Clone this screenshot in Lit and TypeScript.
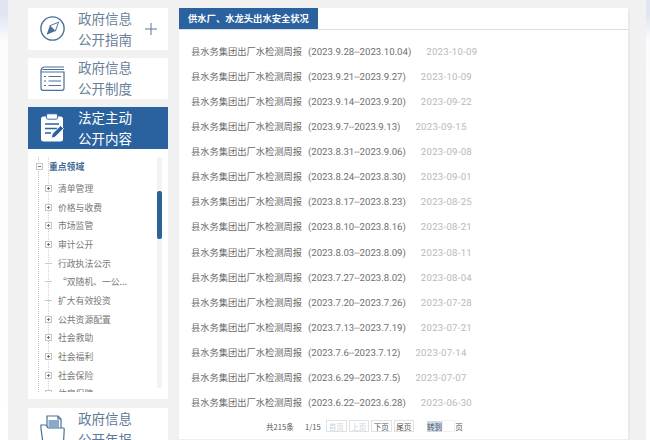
import { LitElement, html, css, svg } from "lit";
import { customElement } from "lit/decorators.js";

const rows: [string, string][] = [
  ["2023.9.28--2023.10.04", "2023-10-09"],
  ["2023.9.21--2023.9.27", "2023-10-09"],
  ["2023.9.14--2023.9.20", "2023-09-22"],
  ["2023.9.7--2023.9.13", "2023-09-15"],
  ["2023.8.31--2023.9.06", "2023-09-08"],
  ["2023.8.24--2023.8.30", "2023-09-01"],
  ["2023.8.17--2023.8.23", "2023-08-25"],
  ["2023.8.10--2023.8.16", "2023-08-21"],
  ["2023.8.03--2023.8.09", "2023-08-11"],
  ["2023.7.27--2023.8.02", "2023-08-04"],
  ["2023.7.20--2023.7.26", "2023-07-28"],
  ["2023.7.13--2023.7.19", "2023-07-21"],
  ["2023.7.6--2023.7.12", "2023-07-14"],
  ["2023.6.29--2023.7.5", "2023-07-07"],
  ["2023.6.22--2023.6.28", "2023-06-30"],
];

const tree: [string, boolean][] = [
  ["清单管理", true],
  ["价格与收费", true],
  ["市场监管", true],
  ["审计公开", true],
  ["行政执法公示", false],
  ["“双随机、一公...", false],
  ["扩大有效投资", false],
  ["公共资源配置", true],
  ["社会救助", true],
  ["社会福利", true],
  ["社会保险", true],
  ["住房保障", true],
];

const compass = svg`<svg class="ico" viewBox="0 0 25 25" width="25" height="25" fill="none">
  <circle cx="12.5" cy="12.5" r="11.6" stroke="#4a7097" stroke-width="1.4"/>
  <path d="M18.6 6.2 L15.4 15 L6.6 18.8 L9.8 9.8 Z" fill="#4a7097"/>
  <path d="M18.6 6.2 L9.8 9.8 L15.4 15 Z" fill="#fff" stroke="#4a7097" stroke-width=".9"/>
</svg>`;

const listDoc = svg`<svg class="ico" viewBox="0 0 25 25" width="25" height="25" fill="none" stroke="#4a7097" stroke-width="1.2">
  <path d="M1 5 V22 Q1 24.3 3 24.3 H22 Q24 24.3 24 22 V5.5"/>
  <path d="M1 5 Q1 1 5 1 H24"/>
  <path d="M2.5 3.5 H24 M1 6 H24"/>
  <path d="M4 10.5 H6 M8.5 10.5 H21 M4 15 H6 M8.5 15 H21 M4 19.5 H6 M8.5 19.5 H21"/>
</svg>`;

const clip = svg`<svg class="ico" viewBox="0 0 24 29" width="24" height="29" fill="none">
  <rect x="1" y="3.5" width="22" height="25" rx="2.5" fill="#fff"/>
  <rect x="6.5" y="0.8" width="11" height="5.4" rx="1.4" fill="#fff" stroke="#2a62a0" stroke-width=".9"/>
  <path d="M5 11 H19 M5 15.5 H17 M5 20 H11" stroke="#2a62a0" stroke-width="1.5"/>
  <path d="M20.5 12.6 L23.6 15.6 L15 24.2 L11.2 25.2 L12.2 21 Z" fill="#2a62a0" stroke="#fff" stroke-width=".9"/>
</svg>`;

const folder = svg`<svg class="ico" viewBox="0 0 25 28" width="25" height="28" fill="none" stroke="#4a7097" stroke-width="1.2">
  <path d="M7 12 V1 H18 L21 4 V13" />
  <path d="M18 1 V4 H21" />
  <rect x="8.5" y="5" width="10.5" height="7.5" fill="#8aa9c8" stroke="none"/>
  <path d="M1 10 H6 L8 13 H23 Q24.4 13 24.2 15 L23.5 28 H3 L1 14 Z" fill="#fff"/>
</svg>`;

@customElement("app-root")
export class AppRoot extends LitElement {
  static styles = css`
    :host {
      display: block;
      width: 650px;
      height: 440px;
      overflow: hidden;
      background: linear-gradient(180deg, #dfe6f2 0, #dfe6f2 14px, #fcfcfd 42px, #fff 100%);
      font-family: "Noto Sans CJK SC", "Liberation Sans", sans-serif;
    }
    .page {
      margin-left: 8px;
      width: 638px;
      height: 440px;
      background: #f1f1f1;
      box-sizing: border-box;
      padding: 8px 0 0 20px;
      display: flex;
      gap: 11px;
    }
    .side {
      width: 140px;
      flex: none;
      display: flex;
      flex-direction: column;
    }
    .card {
      height: 41.5px;
      background: #fff;
      display: flex;
      align-items: center;
      flex: none;
      margin-bottom: 8px;
      color: #6a7f99;
      font-size: 13.5px;
      line-height: 21px;
    }
    .card .iw {
      width: 50px;
      display: flex;
      padding-left: 12px;
      box-sizing: border-box;
      flex: none;
    }
    .card .t { white-space: nowrap; }
    .plus {
      margin-left: auto;
      width: 12px;
      height: 12px;
      margin-right: 11px;
      flex: none;
    }
    .card.on {
      background: #2a62a0;
      color: #fff;
      margin-bottom: 0;
    }
    .card.last {
      height: 60px;
      align-items: flex-start;
      margin: 9px 0 0;
      color: #5f7a99;
    }
    .card.last .iw { padding-top: 7px; }
    .treecard {
      height: 250px;
      background: #fff;
      flex: none;
      display: flex;
      box-sizing: border-box;
      padding: 8.5px 6px 7px 0;
    }
    .tree {
      flex: 1;
      overflow: hidden;
      font-size: 8.8px;
      color: #777;
      background-image:
        repeating-linear-gradient(#c4c4c4 0 1px, transparent 1px 2px),
        repeating-linear-gradient(#d4d4d4 0 1px, transparent 1px 2px);
      background-size: 1px 100%, 1px 100%;
      background-position: 10px 0, 20px 0;
      background-repeat: no-repeat;
    }
    .root {
      display: flex;
      align-items: center;
      height: 18px;
      margin: 0.5px 0 3.5px;
      padding-left: 8px;
      gap: 6px;
      color: #3f6a94;
      font-weight: 700;
    }
    .item {
      height: 18.7px;
      display: flex;
      align-items: center;
      padding-left: 17px;
      gap: 6px;
      white-space: nowrap;
    }
    .box {
      width: 7px;
      height: 7px;
      flex: none;
      display: block;
    }
    .dash {
      width: 7px;
      height: 1px;
      background: #c9c9c9;
      flex: none;
    }
    .track {
      width: 5px;
      height: 231px;
      background: #f3f3f3;
      flex: none;
      border-radius: 2px;
      position: relative;
    }
    .thumb {
      position: absolute;
      left: 0;
      top: 34px;
      width: 5px;
      height: 48px;
      background: #2a6496;
      border-radius: 2px;
    }
    .main {
      width: 449px;
      flex: none;
      background: #fff;
      height: 432px;
      display: flex;
      flex-direction: column;
      box-shadow: 2px 0 1px -0.5px #e9e9e9;
    }
    .head {
      height: 20.5px;
      border-bottom: 1px solid #ddd;
      flex: none;
    }
    .tab {
      width: 139px;
      height: 20.5px;
      background: #2a62a0;
      color: #fff;
      font-size: 9.3px;
      font-weight: 700;
      display: flex;
      align-items: center;
      padding-left: 9px;
      box-sizing: border-box;
      white-space: nowrap;
    }
    .rows {
      display: flex;
      flex-direction: column;
      padding: 9.5px 0 0 12px;
    }
    .row {
      height: 25.07px;
      line-height: 25.07px;
      display: flex;
      align-items: baseline;
      font-size: 9.25px;
      color: #6a6a6a;
      white-space: nowrap;
    }
    .row .r {
      margin-left: 6px;
      font-family: Roboto, "Liberation Sans", sans-serif;
      font-size: 9.65px;
      color: #707070;
      text-rendering: geometricPrecision;
    }
    .row .d {
      margin-left: 15px;
      font-family: Roboto, "Liberation Sans", sans-serif;
      font-size: 9.65px;
      color: #b9b9b9;
      letter-spacing: .25px;
      text-rendering: geometricPrecision;
    }
    .pager {
      display: flex;
      align-items: center;
      box-sizing: border-box;
      padding: 1px 0 2px 87px;
      height: 25px;
      font-size: 7.6px;
      color: #555;
      white-space: nowrap;
      border-bottom: 1px solid #eee;
    }
    .pager .btn {
      border: 1px solid #e2e2e2;
      height: 10px;
      width: 18.5px;
      display: flex;
      align-items: center;
      justify-content: center;
      margin-right: 2px;
    }
    .pager .off { color: #c8d4e0; }
    .pager .count { width: 39px; }
    .pager .pos { width: 21px; }
    .pager .sel { background: #c9d9ea; margin-left: 11px; }
    .pager .inp { width: 11px; height: 10px; border: 1px solid #f0f0f0; }
  `;

  private box() {
    return html`<svg class="box" viewBox="0 0 7 7"><rect x=".5" y=".5" width="6" height="6" fill="#fff" stroke="#c4c4c4"/><path d="M2 3.5H5M3.5 2V5" stroke="#777"/></svg>`;
  }

  render() {
    return html`
      <div class="page">
        <div class="side">
          <div class="card"><div class="iw">${compass}</div><div class="t">政府信息<br />公开指南</div>
            <svg class="plus" viewBox="0 0 12 12"><path d="M6 0V12M0 6H12" stroke="#5d7796" stroke-width="1"/></svg></div>
          <div class="card"><div class="iw">${listDoc}</div><div class="t">政府信息<br />公开制度</div></div>
          <div class="card on"><div class="iw">${clip}</div><div class="t">法定主动<br />公开内容</div></div>
          <div class="treecard">
            <div class="tree">
              <div class="root">
                <svg class="box" viewBox="0 0 7 7"><rect x=".5" y=".5" width="6" height="6" fill="#fff" stroke="#c4c4c4"/><path d="M2 3.5H5" stroke="#777"/></svg>
                <span>重点领域</span>
              </div>
              ${tree.map(
                ([t, b]) => html`<div class="item">${b ? this.box() : html`<span class="dash"></span>`}<span>${t}</span></div>`
              )}
            </div>
            <div class="track"><div class="thumb"></div></div>
          </div>
          <div class="card last"><div class="iw">${folder}</div><div class="t">政府信息<br />公开年报</div></div>
        </div>
        <div class="main">
          <div class="head"><div class="tab">供水厂、水龙头出水安全状况</div></div>
          <div class="rows">
            ${rows.map(
              ([r, d]) => html`<div class="row"><span>县水务集团出厂水检测周报</span><span class="r">(${r})</span><span class="d">${d}</span></div>`
            )}
          </div>
          <div class="pager">
            <span class="count">共215条</span><span class="pos">1/15</span>
            <span class="btn off">首页</span><span class="btn off">上页</span><span class="btn">下页</span><span class="btn">尾页</span>
            <span class="sel">转到</span><span class="inp"></span><span>页</span>
          </div>
        </div>
      </div>
    `;
  }
}
